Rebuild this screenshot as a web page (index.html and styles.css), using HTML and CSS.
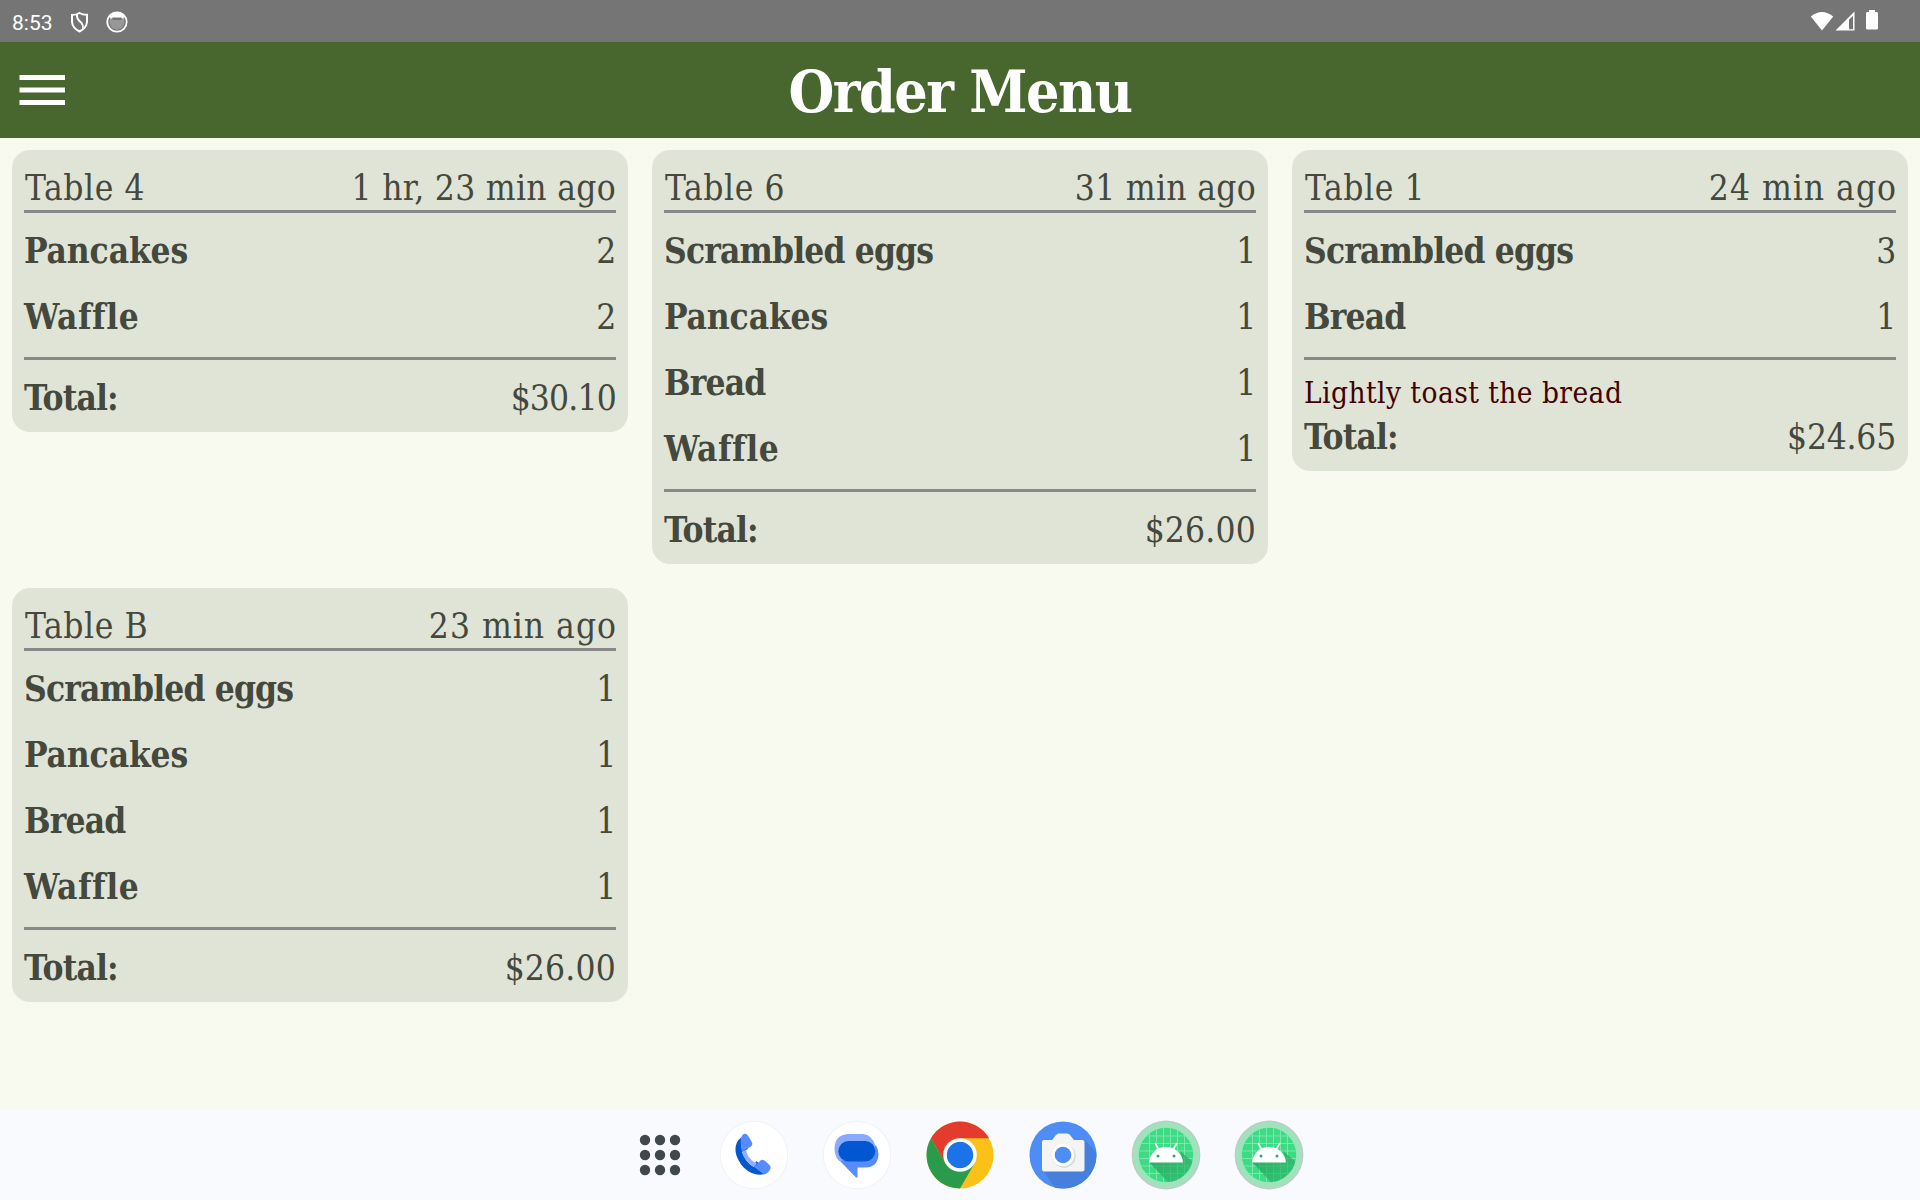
FILE: index.html
```html
<!DOCTYPE html>
<html lang="en">
<head>
<meta charset="utf-8">
<title>Order Menu</title>
<link rel="stylesheet" href="styles.css">
</head>
<body>
<div class="status">
  <span class="clock">8:53</span>
  <svg class="status-shield" width="20" height="24" viewBox="0 0 20 24" fill="none" stroke="#fff" stroke-width="2"><path d="M2 4 Q6 4 9.500 2 Q13 4 17 3.800 V11 Q16.500 17 9.500 20.500 Q2.500 17 2 11Z"/><path d="M7 3 V5 Q7 7.500 9 9.500 L11.500 12 Q13.500 14.500 13 17.500"/></svg>
  <svg class="status-cat" width="24" height="24" viewBox="0 0 24 24"><circle cx="12" cy="12" r="9.700" fill="none" stroke="#fff" stroke-width="1.800"/><path d="M5 6 Q8 2 12 2 T19 6 L18.500 9 L16 7.500 H8 L5.500 9Z" fill="#fff"/><path d="M5 8 H7 L8 10 H16 L17 8 H19 L19.500 13 L17 18 L12 20 L7 18 L4.500 13Z" fill="#fff" opacity=".25"/></svg>
  <svg class="status-right" width="70" height="24" viewBox="0 0 70 24" fill="#fff"><path d="M.800 5.500 Q12 -3.500 23.200 5.500 L12 19.500Z"/><path fill-rule="evenodd" d="M25.500 19.500 L44.500 0.500 V19.500Z M39 8.500 V18.300 H43 V5Z"/><path d="M59 -1 H65 V1 H66.500 Q68 1 68 2.500 V17 Q68 18.500 66.500 18.500 H57.500 Q56 18.500 56 17 V2.500 Q56 1 57.500 1 H59Z"/></svg>
</div>
<header class="topbar">
  <svg class="menu" width="46" height="30" viewBox="0 0 46 30" fill="#fff"><path d="M0.500 0H46V5H0.500Z M0.500 12.500H46V17.500H0.500Z M0.500 25H46V30H0.500Z"/></svg>
  <h1 class="title">Order Menu</h1>
</header>
<main class="orders">
  <section class="card">
    <div class="head"><span class="table">Table 4</span><span class="age-long">1 hr, 23 min ago</span></div>
    <div class="items">
      <div class="row"><b class="mid">Pancakes</b><span>2</span></div>
      <div class="row"><b class="wide">Waffle</b><span>2</span></div>
    </div>
    <div class="total"><b>Total:</b><span class="tight">$30.10</span></div>
  </section>
  <section class="card">
    <div class="head"><span class="table">Table 6</span><span class="age-long">31 min ago</span></div>
    <div class="items">
      <div class="row"><b>Scrambled eggs</b><span>1</span></div>
      <div class="row"><b class="mid">Pancakes</b><span>1</span></div>
      <div class="row"><b>Bread</b><span>1</span></div>
      <div class="row"><b class="wide">Waffle</b><span>1</span></div>
    </div>
    <div class="total"><b>Total:</b><span class="loose">$26.00</span></div>
  </section>
  <section class="card">
    <div class="head"><span class="table">Table 1</span><span class="age">24 min ago</span></div>
    <div class="items">
      <div class="row"><b>Scrambled eggs</b><span>3</span></div>
      <div class="row"><b>Bread</b><span>1</span></div>
    </div>
    <p class="note">Lightly toast the bread</p>
    <div class="total"><b>Total:</b><span>$24.65</span></div>
  </section>
  <section class="card">
    <div class="head"><span class="table">Table B</span><span class="age">23 min ago</span></div>
    <div class="items">
      <div class="row"><b>Scrambled eggs</b><span>1</span></div>
      <div class="row"><b class="mid">Pancakes</b><span>1</span></div>
      <div class="row"><b>Bread</b><span>1</span></div>
      <div class="row"><b class="wide">Waffle</b><span>1</span></div>
    </div>
    <div class="total"><b>Total:</b><span class="loose">$26.00</span></div>
  </section>
</main>
<nav class="dock">
  <svg class="app launcher" viewBox="-35 -35 70 70" fill="#40484b"><circle cx="-15" cy="-15" r="5.200"/><circle cy="-15" r="5.200"/><circle cx="15" cy="-15" r="5.200"/><circle cx="-15" r="5.200"/><circle r="5.200"/><circle cx="15" r="5.200"/><circle cx="-15" cy="15" r="5.200"/><circle cy="15" r="5.200"/><circle cx="15" cy="15" r="5.200"/></svg>
  <svg class="app" viewBox="-35 -35 70 70"><circle r="34.200" fill="#f0f1f5"/><circle r="33.300" fill="#fff"/>
    <path d="M-13 -17.500 C-20 -12 -20 -2 -15 6 C-9 17 2 21.500 11 19 L15 16 L2 6 L0 12 C-6 9 -10 3 -12 -3 L-6 -6Z" fill="#0057d0"/>
    <path d="M-12 -3 L-8 -5 C-7 1 -3 6 3 8.500 L0 12 C-6 9 -10 3 -12 -3Z" fill="#8ab0ff"/>
    <path d="M-13 -17.500 L-11.500 -20 Q-9 -22.500 -6.500 -20 Q-4 -16.500 -2 -12.500 Q-1 -10 -3 -8.500 L-12 -3.500 Q-14 -10 -13 -17.500Z M0 12 L6 6 Q8 4 10.500 5.500 L15 9.500 Q18 12 15.500 15.500 Q13.500 18.500 10 19.500Z" fill="#578cff"/></svg>
  <svg class="app" viewBox="-35 -35 70 70"><circle r="34.200" fill="#f0f1f5"/><circle r="33.300" fill="#fff"/>
    <path d="M-5 -14 H10 Q21.500 -11.500 21.500 -1 Q21 12.500 8 12.500 H.500 V22.500 L-1 22.500 L-18 5 Q-20 -14 -5 -14Z" fill="#578cff"/>
    <path d="M-9 -21 H6 Q15 -20 18 -10 Q19 -4 15 2 L-18 6 Q-22.500 1 -22.500 -7 Q-22 -20 -9 -21Z" fill="#88a9ff"/>
    <rect x="-18.700" y="-14" width="37" height="20.500" rx="10.250" fill="#0057d0"/></svg>
  <svg class="app" viewBox="-35 -35 70 70"><circle r="33.500" fill="#fbc116"/>
    <path d="M-29 -16.750 A33.500 33.500 0 0 1 29 -16.750 H0 L-14.500 8.400Z" fill="#e33b2e"/>
    <path d="M-29 -16.750 A33.500 33.500 0 0 0 0 33.500 L14.500 8.400 L-14.500 8.400Z" fill="#299b4b"/>
    <circle r="16.800" fill="#fff"/><circle r="13.200" fill="#1a73e8"/></svg>
  <svg class="app" viewBox="-35 -35 70 70"><defs><clipPath id="disc"><circle r="33.500"/></clipPath></defs><circle r="33.500" fill="#4e8df5"/>
    <path clip-path="url(#disc)" d="M21 -15 L55 18 V60 H10 L-20 15Z" fill="#467fdc"/>
    <path d="M-21 -13 Q-21 -15 -19 -15 H-11 L-7 -20 Q-6 -21.500 -4 -21.500 H4 Q6 -21.500 7 -20 L11 -15 H19 Q21.500 -15 21.500 -13 V14 Q21.500 16.500 19 16.500 H-19 Q-21 16.500 -21 14Z" fill="#f4f4f4"/>
    <circle cx="1" cy="1" r="11.800" fill="#d9d9dc"/><circle r="11.200" fill="#fff"/><circle r="8.300" fill="#4e8df5"/></svg>
  <svg class="app" viewBox="-35 -35 70 70"><defs>
      <clipPath id="face"><circle r="27.200"/></clipPath>
      <linearGradient id="shade" x1="0" y1="0" x2="1" y2="1"><stop offset="0" stop-color="#1f9a56" stop-opacity=".8"/><stop offset="1" stop-color="#2fb86c" stop-opacity=".4"/></linearGradient>
      <g id="robot"><circle r="34.400" fill="#c4c8c8"/><circle r="33.200" fill="#9fe3bd"/><circle r="27.200" fill="#3ddc84"/>
        <g clip-path="url(#face)"><path d="M-16.500 -28V28 M-9.500 -28V28 M-2.500 -28V28 M4.500 -28V28 M11.500 -28V28 M18.500 -28V28 M-28 -19H28 M-28 -11.500H28 M-28 -4H28 M-28 3.500H28 M-28 11H28 M-28 18.500H28" stroke="#8beab4" stroke-width=".8"/>
        <path d="M-17 7 L17 7 L14 -4 L40 18 V40 H14Z" fill="url(#shade)"/></g>
        <path d="M-17 7.500 C-16 -2 -9 -8 0 -8 S16 -2 17 7.500Z" fill="#fff"/><path d="M-7.500 -6 L-11 -12 M7.500 -6 L11 -12" stroke="#fff" stroke-width="1.600"/><circle cx="-8" cy="1" r="1.500" fill="#2fa566"/><circle cx="8" cy="1" r="1.500" fill="#2fa566"/></g>
    </defs><use href="#robot"/></svg>
  <svg class="app" viewBox="-35 -35 70 70"><use href="#robot"/></svg>
</nav>
</body>
</html>
```
FILE: styles.css
```css
* { box-sizing: border-box; }

body {
  margin: 0;
  width: 1920px;
  height: 1200px;
  display: flex;
  flex-direction: column;
  overflow: hidden;
  background: #f9faef;
  color: #44483d;
  font-family: "Roboto Slab", "DejaVu Serif Condensed", "DejaVu Serif", serif;
  font-stretch: condensed;
}

svg { display: block; flex: none; }

.status {
  height: 42px;
  flex: none;
  display: flex;
  align-items: flex-start;
  padding: 10px 40px 0 12px;
  background: #757575;
  color: #fff;
  font: 21px/26px Roboto, sans-serif;
}
.clock { width: 58px; }
.status-shield { margin-top: 1px; }
.status-cat { margin-left: 15px; }
.status-right { margin-left: auto; margin-top: 1px; overflow: visible; }

.topbar {
  height: 96px;
  flex: none;
  display: grid;
  grid-template-columns: 46px 1fr 46px;
  align-items: center;
  padding: 0 19px;
  background: #48672f;
  color: #fff;
}
.title {
  margin: 0;
  padding-top: 4px;
  text-align: center;
  font-size: 58.500px;
  line-height: 92px;
  letter-spacing: -1.5px;
}

.orders {
  flex: 1;
  display: grid;
  grid-template-columns: repeat(3, 1fr);
  grid-auto-rows: max-content;
  align-items: start;
  gap: 24px;
  padding: 12px;
}
.card {
  padding: 12px;
  border-radius: 18px;
  background: #e0e4d6;
  font-size: 35px;
  line-height: 48px;
  letter-spacing: -0.2px;
}
.card b { letter-spacing: -0.85px; }
.card .mid { letter-spacing: -0.15px; }
.card .wide { letter-spacing: 0.6px; }
.tight { letter-spacing: -0.8px; }
.loose { letter-spacing: 0.2px; }

.head, .row, .total { display: flex; justify-content: space-between; }
.head { height: 48px; padding-top: 2px; }
.table { padding-left: 1px; letter-spacing: 0.6px; }
.age { margin-right: -1px; letter-spacing: 1px; }
.age-long { letter-spacing: 0.3px; }
.items {
  padding: 6px 0;
  border-top: 3px solid #888;
  border-bottom: 3px solid #888;
}
.row { height: 66px; padding: 8px 0 10px; }
.total { height: 48px; padding-top: 2px; margin-top: 12px; }
.note {
  margin: 12px 0 0;
  height: 39px;
  color: #410002;
  font-size: 29.500px;
  line-height: 42px;
  letter-spacing: 0.45px;
}
.note + .total { margin-top: 0; }

.dock {
  height: 90px;
  flex: none;
  display: flex;
  align-items: center;
  gap: 33px;
  padding: 0 0 1px 625px;
  background: #f8fafe;
}
.app { width: 70px; height: 70px; overflow: visible; }
.launcher { margin-right: -9px; }
```
